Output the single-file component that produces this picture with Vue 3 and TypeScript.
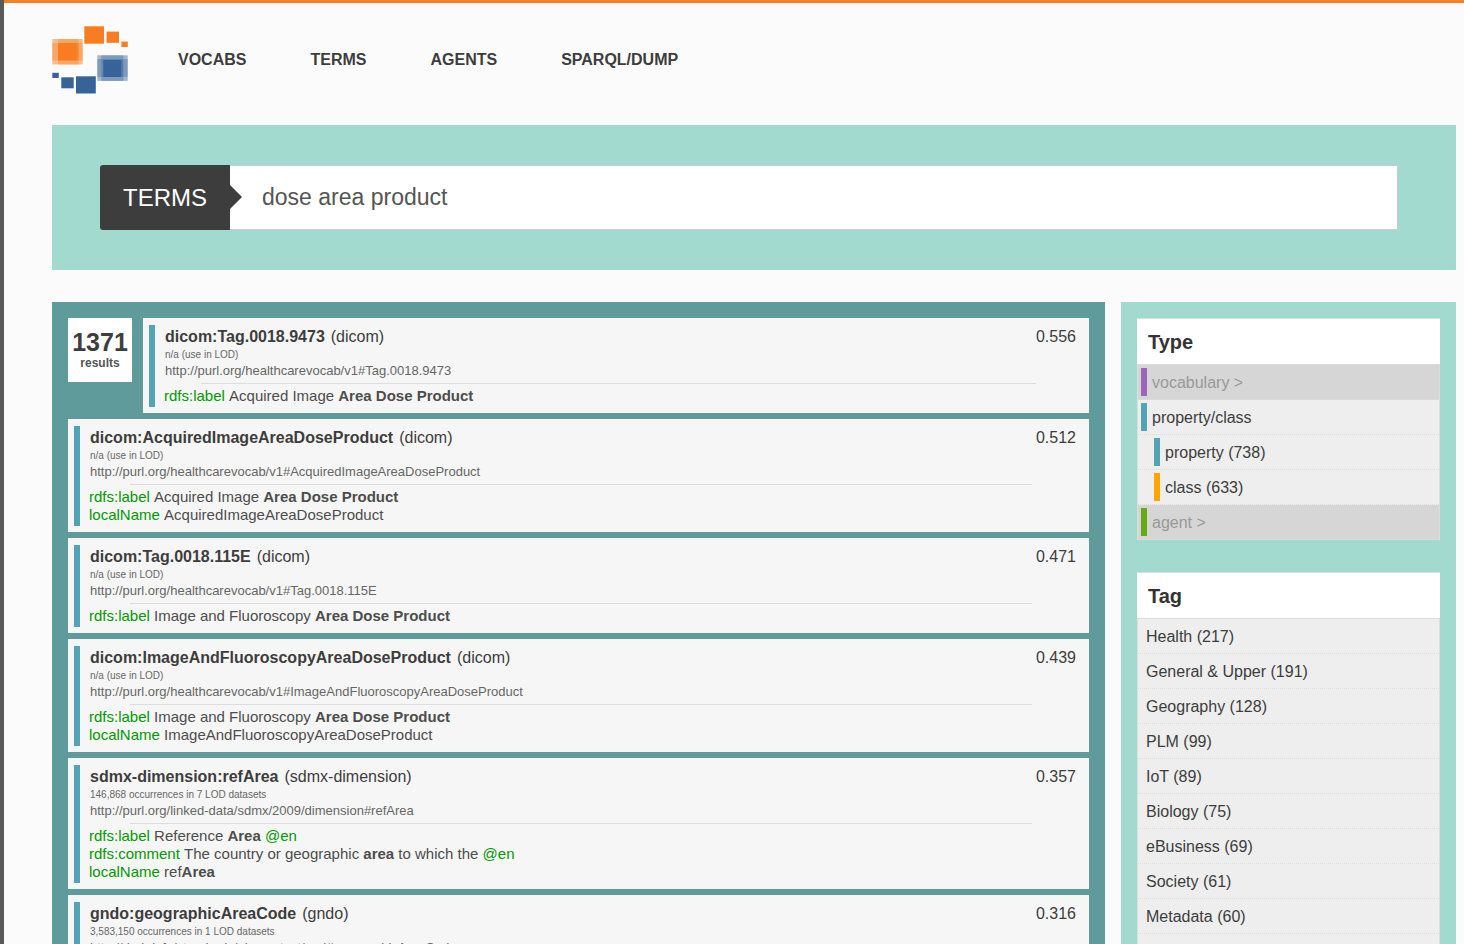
<script setup lang="ts">
import { ref } from 'vue'

interface Piece {
  text: string
  kind?: 'hit' | 'lang'
}

interface Detail {
  field: string
  pieces: Piece[]
}

interface Result {
  term: string
  vocab: string
  usage: string
  uri: string
  score: string
  details: Detail[]
}

interface TypeFacet {
  label: string
  color: string
  muted?: boolean
  nested?: boolean
}

const navigation: string[] = ['VOCABS', 'TERMS', 'AGENTS', 'SPARQL/DUMP']
const query = ref<string>('dose area product')

const hit = (text: string): Piece => ({ text, kind: 'hit' })
const lang = (text: string): Piece => ({ text, kind: 'lang' })
const plain = (text: string): Piece => ({ text })

const results: Result[] = [
  {
    term: 'dicom:Tag.0018.9473',
    vocab: 'dicom',
    usage: 'n/a (use in LOD)',
    uri: 'http://purl.org/healthcarevocab/v1#Tag.0018.9473',
    score: '0.556',
    details: [{ field: 'rdfs:label', pieces: [plain('Acquired Image '), hit('Area Dose Product')] }],
  },
  {
    term: 'dicom:AcquiredImageAreaDoseProduct',
    vocab: 'dicom',
    usage: 'n/a (use in LOD)',
    uri: 'http://purl.org/healthcarevocab/v1#AcquiredImageAreaDoseProduct',
    score: '0.512',
    details: [
      { field: 'rdfs:label', pieces: [plain('Acquired Image '), hit('Area Dose Product')] },
      { field: 'localName', pieces: [plain('AcquiredImageAreaDoseProduct')] },
    ],
  },
  {
    term: 'dicom:Tag.0018.115E',
    vocab: 'dicom',
    usage: 'n/a (use in LOD)',
    uri: 'http://purl.org/healthcarevocab/v1#Tag.0018.115E',
    score: '0.471',
    details: [{ field: 'rdfs:label', pieces: [plain('Image and Fluoroscopy '), hit('Area Dose Product')] }],
  },
  {
    term: 'dicom:ImageAndFluoroscopyAreaDoseProduct',
    vocab: 'dicom',
    usage: 'n/a (use in LOD)',
    uri: 'http://purl.org/healthcarevocab/v1#ImageAndFluoroscopyAreaDoseProduct',
    score: '0.439',
    details: [
      { field: 'rdfs:label', pieces: [plain('Image and Fluoroscopy '), hit('Area Dose Product')] },
      { field: 'localName', pieces: [plain('ImageAndFluoroscopyAreaDoseProduct')] },
    ],
  },
  {
    term: 'sdmx-dimension:refArea',
    vocab: 'sdmx-dimension',
    usage: '146,868 occurrences in 7 LOD datasets',
    uri: 'http://purl.org/linked-data/sdmx/2009/dimension#refArea',
    score: '0.357',
    details: [
      { field: 'rdfs:label', pieces: [plain('Reference '), hit('Area'), lang(' @en')] },
      {
        field: 'rdfs:comment',
        pieces: [plain('The country or geographic '), hit('area'), plain(' to which the'), lang(' @en')],
      },
      { field: 'localName', pieces: [plain('ref'), hit('Area')] },
    ],
  },
  {
    term: 'gndo:geographicAreaCode',
    vocab: 'gndo',
    usage: '3,583,150 occurrences in 1 LOD datasets',
    uri: 'http://d-nb.info/standards/elementset/gnd#geographicAreaCode',
    score: '0.316',
    details: [],
  },
]

const types: TypeFacet[] = [
  { label: 'vocabulary >', color: '#9b65bb', muted: true },
  { label: 'property/class', color: '#52a3b4' },
  { label: 'property (738)', color: '#52a3b4', nested: true },
  { label: 'class (633)', color: '#ffa500', nested: true },
  { label: 'agent >', color: '#66ab16', muted: true },
]

const tags: string[] = [
  'Health (217)',
  'General & Upper (191)',
  'Geography (128)',
  'PLM (99)',
  'IoT (89)',
  'Biology (75)',
  'eBusiness (69)',
  'Society (61)',
  'Metadata (60)',
]
</script>

<template>
  <div class="page">
    <header class="header">
      <a href="#" class="logo" aria-label="Home">
        <svg width="76" height="68" viewBox="52 26 76 68" aria-hidden="true">
          <g fill="#f77d20">
            <rect x="84.3" y="26.3" width="19.7" height="17.4" />
            <rect x="106.6" y="31.6" width="12.4" height="11.2" />
            <rect x="121.4" y="41.6" width="6.4" height="5.4" />
            <rect x="52.3" y="39" width="30.4" height="25.5" opacity=".5" />
            <rect x="58" y="39" width="20.6" height="25.5" opacity=".35" />
            <rect x="52.3" y="43" width="30.4" height="17.5" opacity=".35" />
            <rect x="58" y="43" width="18.7" height="17.5" />
            <rect x="76.7" y="43" width="2" height="17.5" opacity=".6" />
          </g>
          <g fill="#376497">
            <rect x="52.3" y="72.8" width="6.5" height="5.2" />
            <rect x="61.3" y="77.3" width="12.4" height="11" />
            <rect x="76" y="76.3" width="19.8" height="17.2" />
            <rect x="97.3" y="55.3" width="30.4" height="25.6" opacity=".45" />
            <rect x="101.3" y="55.3" width="22" height="25.6" opacity=".35" />
            <rect x="97.3" y="59" width="30.4" height="18" opacity=".35" />
            <rect x="103.3" y="60" width="17.7" height="17" />
            <rect x="121" y="60" width="1.8" height="17" opacity=".4" />
          </g>
        </svg>
      </a>
      <nav class="nav">
        <a v-for="item in navigation" :key="item" href="#">{{ item }}</a>
      </nav>
    </header>

    <form class="search" @submit.prevent>
      <label class="search-label" for="query">TERMS</label>
      <input id="query" v-model="query" class="search-input" type="text" />
    </form>

    <div class="columns">
      <main class="results">
        <div
          v-for="(result, index) in results"
          :key="result.term"
          class="result-row"
        >
          <div v-if="index === 0" class="count">
            <span class="count-number">1371</span>
            <span class="count-label">results</span>
          </div>
          <article class="card">
            <div class="card-body">
              <div class="card-head">
                <h2 class="term">
                  <a href="#">{{ result.term }}</a>
                  <span class="vocab">({{ result.vocab }})</span>
                </h2>
                <span class="score">{{ result.score }}</span>
              </div>
              <p class="usage">{{ result.usage }}</p>
              <p class="uri">{{ result.uri }}</p>
              <hr class="rule" />
              <div class="details">
                <p v-for="detail in result.details" :key="detail.field">
                  <span class="green">{{ detail.field }}</span>&nbsp;<span
                    v-for="(piece, i) in detail.pieces"
                    :key="i"
                    :class="{ hit: piece.kind === 'hit', green: piece.kind === 'lang' }"
                  >{{ piece.text }}</span>
                </p>
              </div>
            </div>
          </article>
        </div>
      </main>

      <aside class="sidebar">
        <section class="facet">
          <h3>Type</h3>
          <ul>
            <li
              v-for="type in types"
              :key="type.label"
              :class="['type-row', { muted: type.muted, nested: type.nested }]"
            >
              <span class="swatch" :style="{ background: type.color }"></span>
              <a href="#">{{ type.label }}</a>
            </li>
          </ul>
        </section>
        <section class="facet">
          <h3>Tag</h3>
          <ul>
            <li v-for="tag in tags" :key="tag" class="tag-row">
              <a href="#">{{ tag }}</a>
            </li>
            <li class="tag-row"></li>
          </ul>
        </section>
      </aside>
    </div>
  </div>
</template>

<style>
body {
  background: #fbfbfb;
}
</style>

<style scoped>
.page {
  box-sizing: border-box;
  height: 100vh;
  overflow: hidden;
  padding: 3px 8px 0 48px;
  border-left: 4px solid #5b5957;
  background: #fbfbfb;
  box-shadow: inset 0 3px #fa7f22;
  color: #3d3d3d;
  font-family: "Liberation Sans", Arial, sans-serif;
  font-size: 16px;
}

a {
  color: inherit;
  text-decoration: none;
}

p,
h2,
h3,
ul {
  margin: 0;
  padding: 0;
}

.header {
  display: flex;
  align-items: center;
  gap: 50px;
  height: 122px;
  box-sizing: border-box;
  padding-bottom: 8px;
}

.logo,
.logo svg {
  display: block;
}

.nav {
  display: flex;
  gap: 64px;
  font-weight: bold;
  line-height: 20px;
}

.search {
  display: flex;
  padding: 40px 58px 40px 48px;
  background: #a2dad0;
}

.search-label {
  position: relative;
  box-sizing: border-box;
  width: 130px;
  height: 65px;
  border-radius: 3px 0 0 3px;
  background: #3d3d3d;
  color: #fff;
  font-size: 24px;
  line-height: 65px;
  text-align: center;
}

.search-label::after {
  content: "";
  position: absolute;
  top: 20px;
  left: 100%;
  border: 12px solid transparent;
  border-right-width: 0;
  border-left-color: #3d3d3d;
}

.search-input {
  flex: 1;
  min-width: 0;
  box-sizing: border-box;
  height: 65px;
  padding: 0 32px;
  border: 1px solid #ccc;
  border-left: 0;
  border-radius: 0 2px 2px 0;
  outline: none;
  background: #fff;
  color: #555;
  font: 23px "Liberation Sans", Arial, sans-serif;
}

.columns {
  display: flex;
  gap: 16px;
  margin-top: 32px;
}

.results {
  box-sizing: border-box;
  width: 75%;
  flex: none;
  display: flex;
  flex-direction: column;
  gap: 6px;
  padding: 16px;
  background: #5f9b9a;
}

.result-row {
  display: flex;
  align-items: flex-start;
  gap: 11px;
}

.count {
  display: flex;
  flex-direction: column;
  align-items: center;
  box-sizing: border-box;
  width: 64px;
  height: 64px;
  padding-top: 10px;
  background: #fff;
  font-weight: bold;
}

.count-number {
  font-size: 25px;
  line-height: 28px;
}

.count-label {
  color: #555;
  font-size: 12px;
  line-height: 14px;
}

.card {
  flex: 1;
  min-width: 0;
  padding: 7px 7px 6px 6px;
  background: #f6f6f6;
}

.card-body {
  border-left: 6px solid #52a3b4;
  padding-bottom: 2px;
}

.card-head {
  display: flex;
  justify-content: space-between;
  padding: 0 6px 0 10px;
  line-height: 24px;
}

.term {
  display: flex;
  gap: 6px;
  font-size: 16px;
}

.vocab {
  font-weight: normal;
}

.usage {
  padding-left: 10px;
  color: #666;
  font-size: 10px;
  line-height: 12px;
}

.uri {
  padding: 0 0 2px 10px;
  color: #666;
  font-size: 13px;
  line-height: 20px;
}

.rule {
  height: 1px;
  margin: 0 5%;
  border: 0;
  background: #ddd;
}

.details {
  padding: 3px 0 0 9px;
  color: #4d4d4d;
  font-size: 15px;
  line-height: 18px;
}

.hit {
  font-weight: bold;
}

.green {
  color: #009900;
}

.sidebar {
  flex: 1;
  min-width: 0;
  display: flex;
  flex-direction: column;
  gap: 32px;
  padding: 16px;
  background: #a2dad0;
}

.facet h3 {
  padding: 1px 11px 0;
  border-top: 1px solid #ddd;
  background: #fff;
  color: #333;
  font-size: 20px;
  line-height: 44px;
}

.facet ul {
  border: 1px solid #ddd;
  border-bottom: 0;
  background: #eee;
  list-style: none;
}

.facet li {
  display: flex;
  align-items: center;
  box-sizing: border-box;
  height: 35px;
  border-bottom: 1px dotted #ddd;
}

.facet li a {
  padding-top: 1px;
}

.type-row {
  gap: 5px;
  padding-left: 3px;
}

.type-row.nested {
  padding-left: 16px;
}

.type-row.muted {
  background: #d6d6d6;
  color: #999;
}

.swatch {
  width: 6px;
  height: 28px;
}

.tag-row {
  padding-left: 8px;
}
</style>
